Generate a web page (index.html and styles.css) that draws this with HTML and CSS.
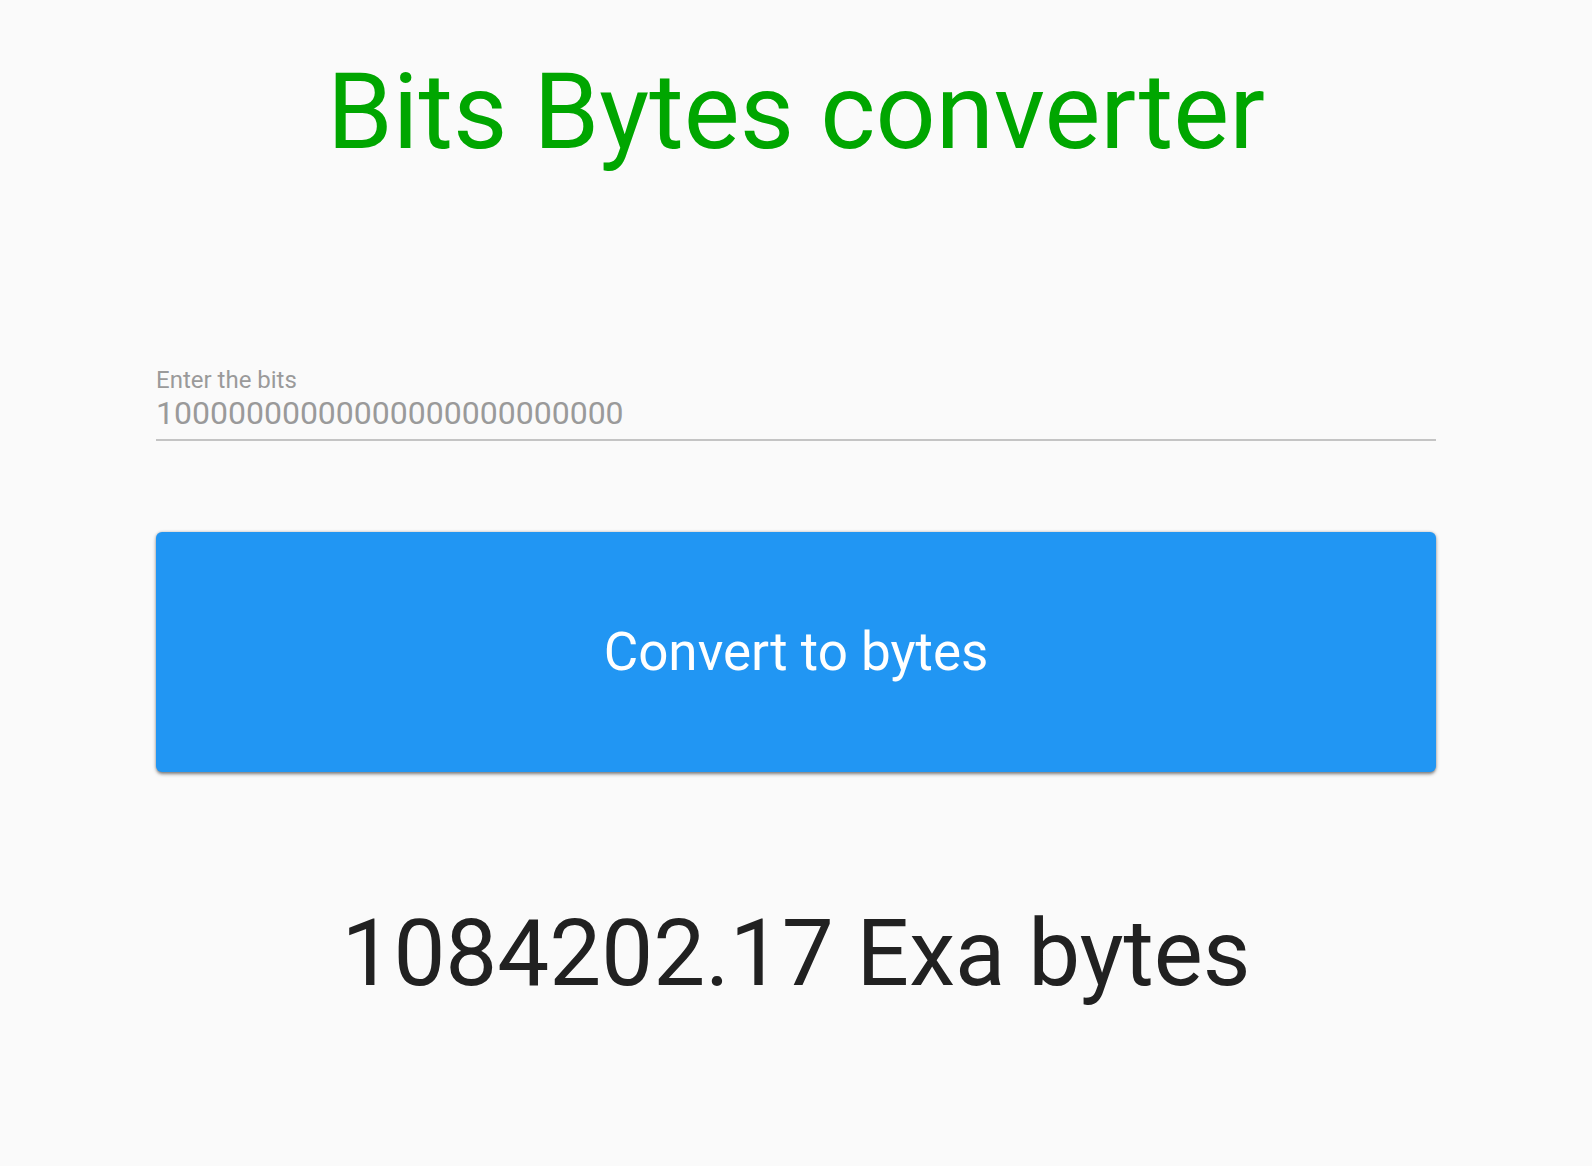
FILE: index.html
```html
<!DOCTYPE html>
<html lang="en">
<head>
<meta charset="utf-8">
<title>Bits Bytes converter</title>
<link rel="stylesheet" href="styles.css">
</head>
<body>
<main class="page">
  <h1 class="title">Bits Bytes converter</h1>
  <div class="field">
    <label class="field-label" for="bits">Enter the bits</label>
    <input class="field-input" id="bits" type="text" value="10000000000000000000000000">
  </div>
  <button class="convert-btn" type="button">Convert to bytes</button>
  <p class="result">1084202.17 Exa bytes</p>
</main>
</body>
</html>
```

FILE: styles.css
```css
* { box-sizing: border-box; }

html, body {
  margin: 0;
  padding: 0;
  background: #fafafa;
}

body {
  font-family: Roboto, "Liberation Sans", Arial, sans-serif;
  color: #212121;
}

.page {
  max-width: 1280px;
  margin: 0 auto;
  display: flex;
  flex-direction: column;
}

.title {
  margin: 51px 0 0;
  font-size: 105.5px;
  line-height: 123px;
  font-weight: 400;
  color: #00a600;
  text-align: center;
}

.field {
  margin-top: 192px;
  display: flex;
  flex-direction: column;
}

.field-label {
  font-size: 24px;
  line-height: 29px;
  color: #9a9a9a;
}

.field-input {
  box-sizing: content-box;
  width: 100%;
  height: 37px;
  margin: 0;
  padding: 0 0 7px;
  border: 0;
  border-bottom: 2px solid #c4c4c4;
  background: transparent;
  font-family: Roboto, "Liberation Sans", Arial, sans-serif;
  font-size: 32px;
  line-height: 37px;
  color: #9a9a9a;
  outline: none;
}

.convert-btn {
  margin-top: 91px;
  height: 240px;
  width: 100%;
  border: 0;
  border-radius: 6px;
  background: #2196f3;
  color: #ffffff;
  font-family: Roboto, "Liberation Sans", Arial, sans-serif;
  font-size: 53px;
  font-weight: 400;
  box-shadow: 0 3px 3px -1px rgba(0, 0, 0, 0.3), 0 2px 4px rgba(0, 0, 0, 0.22), 0 0 3px rgba(0, 0, 0, 0.22);
  cursor: pointer;
}

.result {
  margin: 128px 0 0;
  font-size: 92.5px;
  line-height: 108px;
  text-align: center;
  color: #212121;
}
```
